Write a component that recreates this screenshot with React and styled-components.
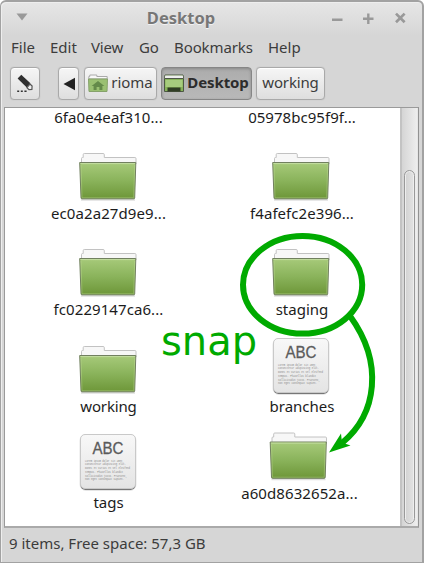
import React from "react";
import styled, { createGlobalStyle, css } from "styled-components";

const Global = createGlobalStyle`
  * { box-sizing: border-box; }
  body { margin: 0; background: #fff; overflow: hidden; }
`;

const Window = styled.div`
  position: relative;
  width: 424px;
  height: 563px;
  display: flex;
  flex-direction: column;
  padding: 0 3px 0 3px;
  border: 2px solid #a2a2a2;
  border-width: 2px 2px 1px 1px;
  border-radius: 6px 6px 0 0;
  background: linear-gradient(#e6e6e6 0, #d6d6d6 34px, #d6d6d6 100%);
  box-shadow: inset 1px 1px 0 #eeeeee;
  font: 15px/20px "Noto Sans", sans-serif;
  color: #3c3c3c;
  overflow: hidden;
`;

const Label = styled.span`
  display: inline-block;
  white-space: nowrap;
  letter-spacing: ${(p) => p.$track || 0}px;
`;

const TitleBar = styled.header`
  height: 34px;
  flex: none;
  display: grid;
  grid-template-columns: 38px 1fr 88px;
  align-items: center;
  svg { display: block; }
`;

const Title = styled.h1`
  margin: 0 11px 2px 0;
  text-align: center;
  font: bold 16.5px/22px "Noto Sans", sans-serif;
  color: #777;
  text-shadow: 0 1px 0 #f2f2f2;
`;

const MenuBar = styled.nav`
  height: 21px;
  flex: none;
  display: flex;
  align-items: center;
  padding-left: 7px;
`;

const MenuItem = styled.span`
  width: ${(p) => p.$w}px;
  flex: none;
  white-space: nowrap;
  letter-spacing: ${(p) => p.$track || 0}px;
`;

const Toolbar = styled.div`
  height: 50px;
  flex: none;
  display: flex;
  align-items: flex-start;
  padding: 10px 0 0 6px;
`;

const Button = styled.button`
  width: ${(p) => p.$w}px;
  height: 33px;
  flex: none;
  margin: 0 ${(p) => p.$gap ?? 5}px 0 0;
  padding: 0;
  display: flex;
  align-items: center;
  justify-content: center;
  gap: 3px;
  border: 1px solid #a9a9a9;
  border-radius: 4px;
  background: linear-gradient(#f6f6f6, #dedede);
  box-shadow: inset 0 1px 0 #fff, 0 0 1px #aaa;
  font: inherit;
  color: #3c3c3c;
  svg { display: block; flex: none; }
  ${Label} { margin-bottom: 3px; }
  ${(p) => p.$active && css`
    border-color: #868686;
    background: linear-gradient(#acacac, #b9b9b9);
    box-shadow: inset 0 1px 3px #888;
    font-weight: bold;
    color: #2c2c2c;
  `}
`;

const Pane = styled.main`
  height: 421px;
  flex: none;
  display: grid;
  grid-template-columns: 1fr 18px;
  border: 1px solid #9a9a9a;
  border-bottom-width: 2px;
  border-color: #9a9a9a #929292 #aaa #9a9a9a;
  background: #fff;
  overflow: hidden;
`;

const Files = styled.div`
  display: grid;
  grid-template-columns: 193px 194px;
  grid-auto-rows: 96.2px;
  margin: -67px 0 0 7px;
  color: #1c1c1c;
`;

const Item = styled.div`
  display: flex;
  flex-direction: column;
  align-items: center;
  transform: translate(${(p) => p.$dx || 0}px, ${(p) => p.$dy || 0}px);
`;

const IconBox = styled.div`
  height: 65px;
  display: flex;
  align-items: flex-end;
  margin: 0 2px 1px 0;
  svg { display: block; }
`;

const ScrollTrack = styled.div`
  display: flex;
  padding: 62px 2px 2px 2px;
  border-left: 2px solid #c3c3c3;
  border-right: 1px solid #e6e6e6;
  background: linear-gradient(90deg, #d5d5d5, #eee);
`;

const ScrollThumb = styled.div`
  flex: 1;
  border: 1px solid #999;
  border-radius: 6px;
  background: linear-gradient(90deg, #d2d2d2, #e3e3e3);
  box-shadow: inset 0 0 0 1px #eee;
`;

const Status = styled.footer`
  flex: 1;
  padding: 5px 0 0 5px;
`;

const Annotation = styled.svg`
  position: absolute;
  left: -1px;
  top: -2px;
  pointer-events: none;
`;

const Note = styled.div`
  position: absolute;
  left: 160px;
  top: 315px;
  font: 40px/48px "DejaVu Sans", sans-serif;
  color: #00aa00;
`;

function Folder() {
  return (
    <svg width="60" height="51" viewBox="0 0 60 51">
      <defs>
        <linearGradient id="folderFront" x1="0" y1="0" x2="0" y2="1">
          <stop offset="0" stopColor="#a7ca7a" />
          <stop offset=".5" stopColor="#8ab35b" />
          <stop offset="1" stopColor="#6d9638" />
        </linearGradient>
      </defs>
      <path d="M3 48.8h54" stroke="#000" strokeOpacity=".13" strokeWidth="2" />
      <path d="M3.5 13V7.5q0-1 1-1h.7V3.6q0-1.1 1.1-1.1h18.9q1.1 0 1.1 1.1v2.9h30.6q1.1 0 1.1 1.1V13z" fill="#f7f7f7" stroke="#c2c2c2" />
      <path d="M1.7 11.5h56.1L56.7 46.8q0 1-1 1H4q-1 0-1-1z" fill="url(#folderFront)" stroke="#71805f" />
      <path d="M2.5 12.6h54.5" stroke="#c3dda2" />
      <path d="M3 14l1 32.7h51.7l1-32.7" fill="none" stroke="#c5df9f" strokeOpacity=".35" />
    </svg>
  );
}

const lines = [
  "Lorem ipsum dolor sit amet,",
  "consectetur adipiscing elit.",
  "Donec et varius et vel eleifend",
  "tempus. Phasellus blandit",
  "sollicitudin justo. Praesent,",
  "non eget consequat sapien.",
];

function TextFile() {
  return (
    <svg width="58" height="58" viewBox="0 0 58 58">
      <defs>
        <linearGradient id="paper" x1="0" y1="0" x2="0" y2="1">
          <stop offset="0" stopColor="#f8f8f8" />
          <stop offset="1" stopColor="#e4e4e4" />
        </linearGradient>
      </defs>
      <rect x="1.5" y="3" width="55" height="54" rx="5" fill="#777" />
      <rect x="1" y="1.5" width="56" height="56" rx="6" fill="none" stroke="#000" strokeOpacity=".1" />
      <rect x="1.5" y="1.5" width="55" height="54" rx="4.5" fill="url(#paper)" stroke="#c9c9c9" />
      <text x="29" y="20.5" textAnchor="middle" textLength="31" lengthAdjust="spacingAndGlyphs" fontFamily="Liberation Sans" fontSize="16.5" fill="#5b5b5b" stroke="#5b5b5b" strokeWidth=".3">ABC</text>
      {lines.map((t, i) => (
        <text key={t} x="6" y={28.6 + i * 3.75} textLength={[39, 41, 45, 38, 42, 39][i]} lengthAdjust="spacingAndGlyphs" fontFamily="Liberation Mono" fontSize="2.7" fill="#888">{t}</text>
      ))}
    </svg>
  );
}

function Pencil() {
  return (
    <svg width="18" height="20" viewBox="0 0 18 20">
      <path d="M1.6 4.4L5.3.8 14.4 9.2 10.8 13.4z" fill="#303030" />
      <path d="M11 13.6L13.9 10l2.2 2.1-.2 3.3-3 .2z" fill="#eee" stroke="#555" strokeWidth="1.2" />
      <path d="M1.2 17.2h2M4.8 17.2h2M8.4 17.2h2.2" stroke="#333" strokeWidth="1.6" />
    </svg>
  );
}

function HomeFolder() {
  return (
    <svg width="20" height="19" viewBox="0 0 20 19">
      <path d="M.8 5V2.5h1V1h7v1.5h10.4V5z" fill="#f8f8f8" stroke="#aaa" />
      <path d="M.5 5h19l-.5 12.5H1z" fill="#9ac072" stroke="#86a26b" />
      <path d="M10 7l6.4 5h-2V16h-3v-3H8.6v3h-3v-4h-2z" fill="#648a4a" />
    </svg>
  );
}

function DesktopIcon() {
  return (
    <svg width="20" height="19" viewBox="0 0 20 19">
      <path d="M1 1h18l.5 3.5v13H.5v-13z" fill="#86b358" stroke="#4d5845" />
      <path d="M1.2 1.5h17.6l.3 2.5H.9z" fill="#ededed" />
      <path d="M1 4.5h18" stroke="#4f5549" />
      <path d="M1.5 6h17v7h-17z" fill="#a7cc7e" />
      <path d="M3.5 13.5h13v4h-13z" fill="#303d25" />
    </svg>
  );
}

const files = [
  { name: "6fa0e4eaf310...", track: 0.06 },
  { name: "05978bc95f9f...", track: 0.04 },
  { name: "ec0a2a27d9e9...", track: 0.1 },
  { name: "f4afefc2e396...", track: 0.06 },
  { name: "fc0229147ca6...", track: 0.08 },
  { name: "staging" },
  { name: "working", track: -0.15 },
  { name: "branches", text: true },
  { name: "tags", text: true },
  { name: "a60d8632652a...", track: 0.08, dx: -2.5, dy: -9.5 },
];

export default function App() {
  return (
    <>
      <Global />
      <Window>
        <TitleBar>
          <svg width="38" height="34" viewBox="0 0 38 34">
            <path d="M12.5 11.5h11L18 18.5z" fill="#999" />
          </svg>
          <Title>Desktop</Title>
          <svg width="88" height="34" viewBox="0 0 88 34" fill="none" stroke="#999" strokeWidth="2.4">
            <path d="M1 17.8h10.5M32 16.8h10.5M37.3 11.5v10.5" />
            <path d="M65 11.6l8.6 8.6M73.6 11.6l-8.6 8.6" strokeWidth="2.7" />
          </svg>
        </TitleBar>
        <MenuBar>
          <MenuItem $w={39}>File</MenuItem>
          <MenuItem $w={41}>Edit</MenuItem>
          <MenuItem $w={48} $track={-0.2}>View</MenuItem>
          <MenuItem $w={35} $track={-0.2}>Go</MenuItem>
          <MenuItem $w={94} $track={-0.1}>Bookmarks</MenuItem>
          <MenuItem $w={40}>Help</MenuItem>
        </MenuBar>
        <Toolbar>
          <Button $w={30} $gap={18} aria-label="Edit location"><Pencil /></Button>
          <Button $w={21} aria-label="Previous">
            <svg width="12" height="14" viewBox="0 0 12 14"><path d="M12 .8v12.4L.5 7z" fill="#222" /></svg>
          </Button>
          <Button $w={73} $gap={4}><HomeFolder /><Label>rioma</Label></Button>
          <Button $w={91} $gap={4} $active><DesktopIcon /><Label $track={-0.1}>Desktop</Label></Button>
          <Button $w={69}><Label $track={-0.15}>working</Label></Button>
        </Toolbar>
        <Pane>
          <Files>
            {files.map((f) => (
              <Item key={f.name} $dx={f.dx} $dy={f.dy}>
                <IconBox>{f.text ? <TextFile /> : <Folder />}</IconBox>
                <Label $track={f.track}>{f.name}</Label>
              </Item>
            ))}
          </Files>
          <ScrollTrack><ScrollThumb /></ScrollTrack>
        </Pane>
        <Status>9 items, Free space: 57,3 GB</Status>
        <Note>snap</Note>
        <Annotation width="424" height="563" viewBox="0 0 424 563">
          <ellipse cx="302.6" cy="284.8" rx="59.6" ry="48.8" fill="none" stroke="#00aa00" strokeWidth="6" />
          <path d="M350 316C384 363 377 414 342 443" fill="none" stroke="#00aa00" strokeWidth="6" />
          <path d="M329 452.5L341 433.5 342 442.5 350.5 445.5z" fill="#00aa00" />
        </Annotation>
      </Window>
    </>
  );
}
